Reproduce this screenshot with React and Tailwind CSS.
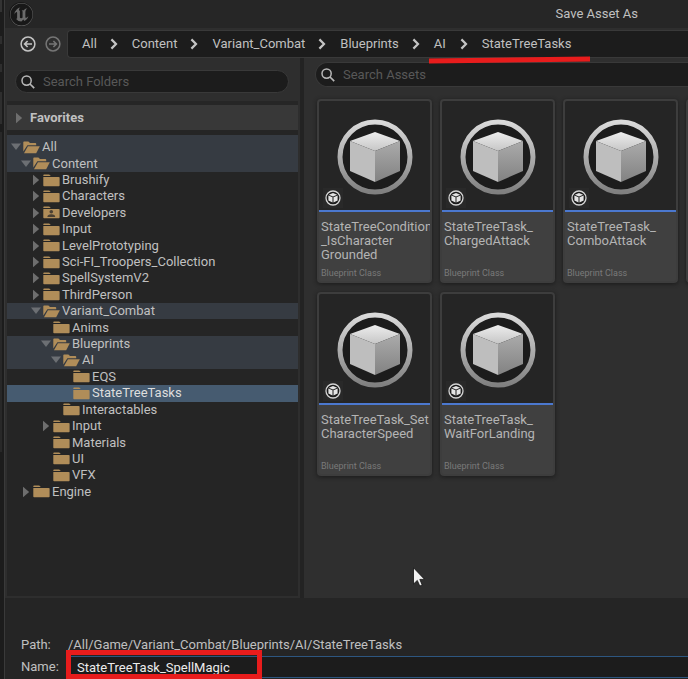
import { SiUnrealengine } from "react-icons/si";

const crumbs = ["All", "Content", "Variant_Combat", "Blueprints"];

const tree = [
  { name: "All", level: 0, state: "open", lit: true },
  { name: "Content", level: 1, state: "open", lit: true },
  { name: "Brushify", level: 2, state: "closed" },
  { name: "Characters", level: 2, state: "closed" },
  { name: "Developers", level: 2, state: "closed", user: true },
  { name: "Input", level: 2, state: "closed" },
  { name: "LevelPrototyping", level: 2, state: "closed" },
  { name: "Sci-FI_Troopers_Collection", level: 2, state: "closed" },
  { name: "SpellSystemV2", level: 2, state: "closed" },
  { name: "ThirdPerson", level: 2, state: "closed" },
  { name: "Variant_Combat", level: 2, state: "open", lit: true },
  { name: "Anims", level: 3 },
  { name: "Blueprints", level: 3, state: "open", lit: true },
  { name: "AI", level: 4, state: "open", lit: true },
  { name: "EQS", level: 5 },
  { name: "StateTreeTasks", level: 5, selected: true },
  { name: "Interactables", level: 4 },
  { name: "Input", level: 3, state: "closed" },
  { name: "Materials", level: 3 },
  { name: "UI", level: 3 },
  { name: "VFX", level: 3 },
  { name: "Engine", level: 1, state: "closed" },
];

const indents = ["pl-[4px]", "pl-[14px]", "pl-[24px]", "pl-[34px]", "pl-[44px]", "pl-[54px]"];

const assets = [
  ["StateTreeCondition", "_IsCharacter", "Grounded"],
  ["StateTreeTask_", "ChargedAttack"],
  ["StateTreeTask_", "ComboAttack"],
  null,
  ["StateTreeTask_Set", "CharacterSpeed"],
  ["StateTreeTask_", "WaitForLanding"],
];

function Chevron() {
  return (
    <svg width="8" height="12" viewBox="0 0 8 12" className="shrink-0" aria-hidden="true">
      <path d="M1.4 1.4 L6 6 L1.4 10.6" fill="none" stroke="#c4c4c4" strokeWidth="2.2" />
    </svg>
  );
}

function CircleArrow({ color, flip }) {
  return (
    <svg width="16" height="16" viewBox="0 0 16 16" aria-hidden="true">
      <g transform={flip ? "translate(16 0) scale(-1 1)" : undefined} fill="none" stroke={color}>
        <circle cx="8" cy="8" r="6.9" strokeWidth="1.5" />
        <path d="M12 8 H4.8 M7.6 5 L4.6 8 L7.6 11" strokeWidth="1.6" />
      </g>
    </svg>
  );
}

function SearchIcon() {
  return (
    <svg width="14" height="14" viewBox="0 0 14 14" className="shrink-0" aria-hidden="true">
      <circle cx="5.6" cy="5.6" r="4.6" fill="none" stroke="#b8b8b8" strokeWidth="1.5" />
      <path d="M9 9 L13.2 13.2" stroke="#b8b8b8" strokeWidth="1.7" />
    </svg>
  );
}

function Arrow({ state }) {
  return (
    <svg width="10" height="12" viewBox="0 0 10 12" className="shrink-0" aria-hidden="true">
      {state === "open" && <path d="M0 2.5 H10 L5 9 Z" fill="#6c6f73" />}
      {state === "closed" && <path d="M2 0.8 L8.2 6 L2 11.2 Z" fill="#6e6e6e" />}
    </svg>
  );
}

function Folder({ open, user }) {
  return (
    <svg width="17" height="13" viewBox="0 0 17 13" className="shrink-0" aria-hidden="true">
      {open ? (
        <g fill="#b08d59">
          <path d="M0.3 1.2 Q0.3 0.4 1.1 0.4 H5.4 L7 2 H12.4 Q13.2 2 13.2 2.8 V4.2 H4.4 L0.3 10.6 Z" />
          <path d="M4.9 5.2 H16.8 L13.2 12.2 H1 Z" />
        </g>
      ) : (
        <g fill="#b08d59">
          <path d="M0.3 2.1 V1.2 Q0.3 0.4 1.1 0.4 H6.2 L7.8 2.1 Z" />
          <path d="M0.3 3 H15.6 Q16.6 3 16.6 3.8 V11.4 Q16.6 12.2 15.8 12.2 H1.1 Q0.3 12.2 0.3 11.4 Z" />
        </g>
      )}
      {user && (
        <g fill="#4a4033">
          <circle cx="8.3" cy="5.7" r="1.8" />
          <path d="M4.4 11 Q4.4 8.2 8.3 8.2 Q12.2 8.2 12.2 11 Z" />
        </g>
      )}
    </svg>
  );
}

function BlueprintCube() {
  return (
    <svg width="76" height="76" viewBox="0 0 76 76" aria-hidden="true">
      <defs>
        <linearGradient id="ring" x1="0" y1="0" x2="0" y2="1">
          <stop offset="0" stopColor="#dadada" />
          <stop offset="1" stopColor="#808080" />
        </linearGradient>
        <linearGradient id="top" x1="0" y1="0" x2="0" y2="1">
          <stop offset="0" stopColor="#ededed" />
          <stop offset="1" stopColor="#c6c6c6" />
        </linearGradient>
        <linearGradient id="side" x1="0" y1="0" x2="0" y2="1">
          <stop offset="0" stopColor="#ababab" />
          <stop offset="1" stopColor="#828282" />
        </linearGradient>
      </defs>
      <circle cx="38" cy="38" r="35" fill="#1c1c1c" stroke="url(#ring)" strokeWidth="5" />
      <path d="M38 13 L63 22 L38 32 L13 22 Z" fill="url(#top)" />
      <path d="M13 22 L38 32 V63 L13 52 Z" fill="#bebebe" />
      <path d="M63 22 L38 32 V63 L63 52 Z" fill="url(#side)" />
    </svg>
  );
}

function SmallCube() {
  return (
    <svg width="16" height="16" viewBox="0 0 16 16" aria-hidden="true">
      <circle cx="8" cy="8" r="7" fill="#1c1c1c" stroke="#d4d4d4" strokeWidth="1.3" />
      <path d="M8 3 L12.2 4.7 L8 6.5 L3.8 4.7 Z" fill="#e4e4e4" />
      <path d="M3.4 5.5 L7.5 7.3 V12.6 L3.4 10.6 Z" fill="#e4e4e4" />
      <path d="M12.6 5.5 L8.5 7.3 V12.6 L12.6 10.6 Z" fill="#e4e4e4" />
    </svg>
  );
}

function AssetCard({ lines }) {
  return (
    <button className="flex h-[184px] flex-col overflow-hidden rounded border-2 border-[#3d3d3d] bg-[#404040] text-left shadow-[0_1px_4px_#1a1a1a]">
      <span className="relative flex h-[111px] w-full items-center justify-center border-b-2 border-[#4b78cf] bg-[#252525] pt-[2px]">
        {lines && <BlueprintCube />}
        {lines && (
          <span className="absolute bottom-[2px] left-[4px] flex size-5 items-center justify-center bg-[#292929]">
            <SmallCube />
          </span>
        )}
      </span>
      {lines && (
        <span className="flex w-full flex-1 flex-col justify-between px-[2px] pt-2 pb-[2px]">
          <span className="text-[13px] leading-[14px] text-[#b4b4b4]">
            {lines.map((line) => (
              <span key={line} className="block whitespace-nowrap">{line}</span>
            ))}
          </span>
          <span className="text-[9px] leading-3 text-[#7a7a7a]">Blueprint Class</span>
        </span>
      )}
    </button>
  );
}

export default function App() {
  return (
    <div className="flex min-h-screen overflow-hidden bg-[#252525] font-['Roboto',sans-serif] text-[13px] text-[#c0c0c0]">

      {/* Edge of the editor window behind the dialog */}
      <div className="flex w-[5px] shrink-0 flex-col border-r border-[#3a3a3a] bg-[#1c1c1c]">
        <div className="h-3 w-[2px] bg-[#333333]" />
        <div className="mt-6 h-2 w-[2px] bg-[#2e2e2e]" />
        <div className="mt-5 h-2 w-[2px] bg-[#2e2e2e]" />
        <div className="mt-5 h-8 w-[2px] bg-[#2e2e2e]" />
        <div className="mt-2 h-80 w-[2px] bg-[#282828]" />
      </div>

      <div className="flex min-w-0 flex-1 flex-col">

        {/* Title bar */}
        <header className="flex h-7 items-center bg-[#262626] pr-[50px] pl-[4px]">
          <div className="flex size-6 items-center justify-center rounded-full bg-[#181818]">
            <SiUnrealengine className="size-[23px] text-[#6b6b6b]" />
          </div>
          <h1 className="ml-auto">Save Asset As</h1>
        </header>

        {/* Navigation */}
        <nav className="flex items-center bg-[#2e2e2e] pt-[2px] pl-[15px]">
          <button aria-label="Back" className="mr-[9px]"><CircleArrow color="#c4c4c4" /></button>
          <button aria-label="Forward" className="mr-[6px]"><CircleArrow color="#757575" flip /></button>
          <div className="flex h-7 min-w-0 flex-1 items-center gap-[14px] rounded-l border border-r-0 border-[#393939] bg-[#1c1c1c] pl-[14px]">
            {crumbs.map((crumb) => (
              <span key={crumb} className="flex items-center gap-[13px]">
                <a href="#">{crumb}</a>
                <Chevron />
              </span>
            ))}
            <span className="relative flex items-center gap-[14px]">
              <a href="#">AI</a>
              <Chevron />
              <a href="#">StateTreeTasks</a>
              <svg className="absolute top-[21px] -left-[5px] z-10 h-[10px] w-[calc(100%+24px)]" viewBox="0 0 161 10" preserveAspectRatio="none" aria-hidden="true">
                <path d="M0 6 L161 4" stroke="#e81c1c" strokeWidth="5" />
              </svg>
            </span>
          </div>
        </nav>

        {/* Panels */}
        <main className="flex flex-1 bg-[#232323]">
          <aside className="flex w-[295px] shrink-0 flex-col border-r-2 border-b-2 border-[#2e2e2e] bg-[#2e2e2e] pl-[2px]">
            <label className="mt-[12px] mr-[9px] ml-[8px] flex h-[23px] items-center gap-2 rounded-full border border-[#393939] bg-[#1c1c1c] px-[5px]">
              <SearchIcon />
              <input type="text" aria-label="Search Folders" placeholder="Search Folders" className="min-w-0 flex-1 bg-transparent outline-none placeholder:text-[#585858]" />
            </label>
            <button className="mt-2 flex h-[29px] items-center gap-[6px] border-t-4 border-[#262626] bg-[#383838] pl-[7px] font-bold">
              <Arrow state="closed" />
              Favorites
            </button>
            <div className="flex-1 bg-[#252525] pt-[5px]">
              <ul className="flex h-[365px] flex-col">
                {tree.map((node, i) => (
                  <li
                    key={i}
                    className={`flex flex-1 ${i === 0 ? "pt-[4px]" : ""} ${node.selected ? "bg-[#465b70] text-[#dedede]" : node.lit ? "bg-[#363b42]" : ""}`}
                  >
                    <button className={`flex flex-1 items-center whitespace-nowrap leading-4 ${indents[node.level]}`}>
                      <Arrow state={node.state} />
                      <span className="mr-[2px] ml-[2px]">
                        <Folder open={node.state === "open"} user={node.user} />
                      </span>
                      {node.name}
                    </button>
                  </li>
                ))}
              </ul>
            </div>
          </aside>

          <section className="relative ml-[4px] min-w-0 flex-1 overflow-hidden bg-[#2f2f2f] pl-[11px]">
            <label className="mt-[4px] flex h-[25px] items-center gap-2 rounded-l-full border border-r-0 border-[#393939] bg-[#1c1c1c] pl-[5px]">
              <SearchIcon />
              <input type="text" aria-label="Search Assets" placeholder="Search Assets" className="min-w-0 flex-1 bg-transparent outline-none placeholder:text-[#585858]" />
            </label>
            <div className="mt-[12px] grid grid-cols-[repeat(4,115px)] gap-x-2 gap-y-[9px] pl-[2px]">
              {assets.map((lines, i) => (
                <AssetCard key={i} lines={lines} />
              ))}
            </div>

            {/* Mouse pointer */}
            <svg width="12" height="20" viewBox="0 0 12 20" className="absolute top-[509px] left-[109px]" aria-hidden="true">
              <path d="M0.5 0.8 V17 L4.3 13.4 L6.8 19 L9.2 18 L6.8 12.4 H11.6 Z" fill="#f2f2f2" stroke="#111111" strokeWidth="0.8" />
            </svg>
          </section>
        </main>

        {/* Path and name */}
        <footer className="bg-[#252525] pt-[36px] pb-[1px]">
          <div className="flex h-[22px] items-center">
            <span className="w-[47px] shrink-0 pl-4">Path:</span>
            <span className="pl-4">/All/Game/Variant_Combat/Blueprints/AI/StateTreeTasks</span>
          </div>
          <div className="flex h-[22px] items-center">
            <label htmlFor="asset-name" className="w-[62px] shrink-0 pl-4">Name:</label>
            <div className="relative min-w-0 flex-1">
              <input
                id="asset-name"
                type="text"
                defaultValue="StateTreeTask_SpellMagic"
                className="h-[22px] w-full border border-r-0 border-[#2d5680] bg-[#1c1c1c] pl-[9px] text-[#ececec] outline-none"
              />
              <div className="pointer-events-none absolute -top-[6px] -bottom-[1px] -left-[1px] w-[196px] border-[5px] border-[#e81c1c]" />
            </div>
          </div>
        </footer>
      </div>
    </div>
  );
}
